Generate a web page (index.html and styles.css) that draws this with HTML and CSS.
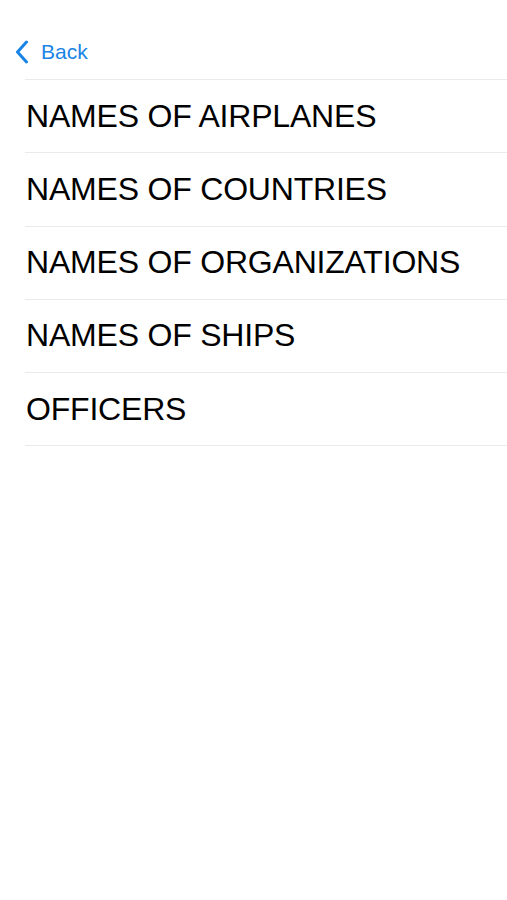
FILE: index.html
```html
<html>
	<head>
		<title>Categories</title>
		<meta name="viewport" content="width=device-width, initial-scale=1.0">
		<link rel="stylesheet" href="styles.css">
	</head>
	<body>
		<nav class="nav-bar">
			<a class="back-link" href="#">
				<svg class="chevron" width="14" height="24" viewBox="0 0 14 24">
					<path d="M11.5 2 L2.5 12 L11.5 22" fill="none" stroke="currentColor" stroke-width="3" stroke-linecap="round" stroke-linejoin="round"/>
				</svg>
				<span>Back</span>
			</a>
		</nav>
		<ul class="topic-list">
			<li>NAMES OF AIRPLANES</li>
			<li>NAMES OF COUNTRIES</li>
			<li>NAMES OF ORGANIZATIONS</li>
			<li>NAMES OF SHIPS</li>
			<li>OFFICERS</li>
		</ul>
	</body>
</html>
```
FILE: styles.css
```css
html {
	font: 20px 'Liberation Sans', Arial, sans-serif;
}
body {
	margin: 0;
	background-color: #fff;
	color: #000;
}
.nav-bar {
	height: 79px;
	display: flex;
	align-items: flex-start;
	padding-top: 37px;
	padding-left: 15px;
	box-sizing: border-box;
}
.back-link {
	display: flex;
	align-items: center;
	gap: 12px;
	color: #1a84e6;
	text-decoration: none;
	font-size: 21px;
	line-height: 30px;
}
.chevron {
	display: block;
}
.topic-list {
	list-style: none;
	margin: 0 0 0 25px;
	padding: 0;
}
.topic-list li {
	height: 72.25px;
	border-top: 1px solid #ebebeb;
	display: flex;
	align-items: center;
	padding-left: 1px;
	font-size: 32px;
	letter-spacing: -0.2px;
}
.topic-list li:last-child {
	border-bottom: 1px solid #ebebeb;
}
```
